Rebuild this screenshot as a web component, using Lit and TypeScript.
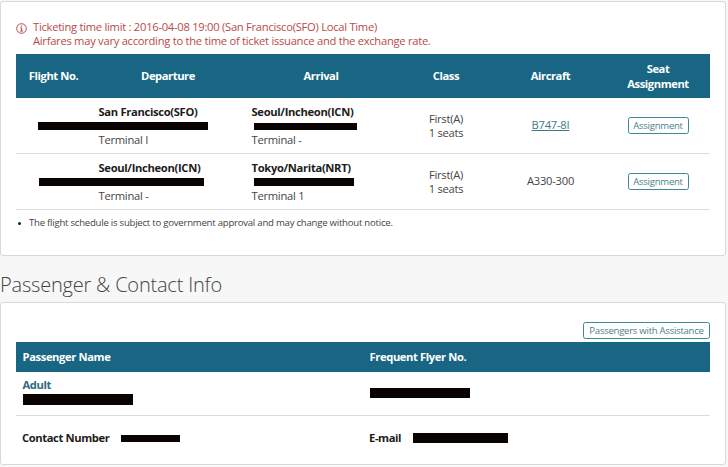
import { LitElement, html, css } from "lit";
import { customElement, property } from "lit/decorators.js";

interface Leg {
  from: string;
  fromTerminal: string;
  to: string;
  toTerminal: string;
  aircraft: string;
  linked: boolean;
}

const LEGS: Leg[] = [
  { from: "San Francisco(SFO)", fromTerminal: "Terminal I", to: "Seoul/Incheon(ICN)", toTerminal: "Terminal -", aircraft: "B747-8I", linked: true },
  { from: "Seoul/Incheon(ICN)", fromTerminal: "Terminal -", to: "Tokyo/Narita(NRT)", toTerminal: "Terminal 1", aircraft: "A330-300", linked: false },
];

@customElement("outline-button")
class OutlineButton extends LitElement {
  static styles = css`
    :host { display: inline-block; }
    button {
      display: block; box-sizing: border-box; width: 100%; height: 17px; padding: 0;
      border: 1px solid #3c8a98; border-radius: 2.5px; background: #fff; color: #4c818b;
      font: 9.6px/14px "Open Sans", sans-serif; letter-spacing: -0.28px; text-align: center; white-space: nowrap;
    }
  `;
  render() {
    return html`<button><slot></slot></button>`;
  }
}

@customElement("flight-table")
class FlightTable extends LitElement {
  @property({ attribute: false }) legs: Leg[] = [];
  static styles = css`
    :host { display: block; font-size: 11.2px; line-height: 14.2px; letter-spacing: -0.25px; color: #444; }
    .row { display: grid; grid-template-columns: 75px 154px 152px 98px 111px 104px; align-items: center; position: relative; }
    .head { box-sizing: border-box; height: 44px; padding-top: 1px; background: #186684; color: #fff; font-weight: 700; letter-spacing: -0.42px; text-align: center; }
    .leg { height: 56px; box-sizing: border-box; border-bottom: 1px solid #dcdcdc; }
    .place { padding: 1px 0 0 7.5px; white-space: nowrap; }
    .place + .place { padding-left: 6.5px; }
    .place b { color: #1c1c1c; letter-spacing: -0.32px; }
    .place span, .place b { display: block; }
    .time { height: 14.2px; display: flex; align-items: center; }
    .mask { background: #090301; display: block; }
    .arr { width: 103px; height: 7px; margin: 0 0 0 2.5px; }
    .second .arr { width: 100px; height: 8px; margin-top: -1px; }
    .flight { position: absolute; left: 22px; top: 24px; width: 170px; height: 8px; }
    .second .flight { left: 23.4px; width: 165px; }
    .center { text-align: center; }
    .class { padding-top: 1px; }
    .link { color: #3c788b; text-decoration: underline; text-underline-offset: 1px; }
    outline-button { width: 61px; }
  `;
  render() {
    return html`
      <div class="row head">
        <span>Flight No.</span><span>Departure</span><span>Arrival</span><span>Class</span><span>Aircraft</span><span>Seat<br />Assignment</span>
      </div>
      ${this.legs.map(
        (l, i) => html`<div class="row leg ${i ? "second" : "first"}">
          <div><i class="mask flight"></i></div>
          <div class="place"><b>${l.from}</b><div class="time"></div><span>${l.fromTerminal}</span></div>
          <div class="place"><b>${l.to}</b><div class="time"><i class="mask arr"></i></div><span>${l.toTerminal}</span></div>
          <div class="center class">First(A)<br />1 seats</div>
          <div class="center">${l.linked ? html`<span class="link">${l.aircraft}</span>` : l.aircraft}</div>
          <div class="center"><outline-button>Assignment</outline-button></div>
        </div>`
      )}
    `;
  }
}

@customElement("passenger-table")
class PassengerTable extends LitElement {
  static styles = css`
    :host { display: block; font-size: 11.2px; line-height: 14px; font-weight: 700; letter-spacing: -0.38px; color: #1c1c1c; }
    .row { display: grid; grid-template-columns: 347px 1fr; }
    .row > div { padding-left: 6.5px; }
    .head { height: 30px; background: #186684; color: #fff; align-items: center; }
    .guest { height: 44px; box-sizing: border-box; border-bottom: 1px solid #dcdcdc; padding-top: 6px; }
    .adult { color: #2d6983; }
    .mask { background: #090301; display: block; }
    .name { width: 110px; height: 11px; margin-top: 2px; margin-left: 0.4px; }
    .ffn { width: 100px; height: 10px; margin: 10px 0 0 0.5px; }
    .contact { height: 44px; align-items: center; }
    .contact > div { display: flex; align-items: center; padding-left: 6px; }
    .phone { width: 59px; height: 7px; margin-left: auto; }
    .mail { width: 95px; height: 10.5px; margin-left: auto; }
    .label { display: flex; width: 158px; align-items: center; }
    .label.short { width: 139px; }
  `;
  render() {
    return html`
      <div class="row head"><div>Passenger Name</div><div>Frequent Flyer No.</div></div>
      <div class="row guest">
        <div><span class="adult">Adult</span><i class="mask name"></i></div>
        <div><i class="mask ffn"></i></div>
      </div>
      <div class="row contact">
        <div><div class="label">Contact Number<i class="mask phone"></i></div></div>
        <div><div class="label short">E-mail<i class="mask mail"></i></div></div>
      </div>
    `;
  }
}

@customElement("app-root")
class AppRoot extends LitElement {
  static styles = css`
    :host { display: block; box-sizing: border-box; width: 728px; height: 467px; padding-top: 1px; background: #f7f7f7; overflow: hidden; font-family: "Open Sans", sans-serif; }
    .card { box-sizing: border-box; width: 726px; padding: 0 15px; border: 1px solid #d8d8d8; border-radius: 3px; background: #fff; }
    .flights { height: 255px; padding-top: 18px; }
    .notice { display: flex; height: 34px; color: #b84a48; font-size: 11.2px; line-height: 13.8px; letter-spacing: -0.27px; white-space: nowrap; }
    .notice svg { width: 11px; height: 11px; margin: 3px 6px 0 0; flex: none; }
    .note { display: flex; align-items: center; font-size: 9.6px; line-height: 14px; letter-spacing: -0.24px; color: #444; margin-top: 6px; }
    .dot { width: 3px; height: 3px; border-radius: 50%; background: #222; margin: 0 8px 0 2px; }
    h2 { margin: 0; height: 46px; font-size: 20px; line-height: 57px; font-weight: 300; letter-spacing: -0.2px; color: #444; white-space: nowrap; }
    .people { height: 163px; padding-top: 19px; }
    .actions { display: flex; justify-content: flex-end; height: 20px; }
    .actions outline-button { width: 127px; }
  `;
  render() {
    return html`
      <section class="card flights">
        <div class="notice">
          <svg viewBox="0 0 11 11" fill="none" stroke="#b84a48">
            <circle cx="5.5" cy="5.5" r="4.8" />
            <path d="M4.2 4.9H5.6V8M4 8H7.1" />
            <path d="M4.9 3H6.1" stroke-width="1.2" />
          </svg>
          <div>Ticketing time limit : 2016-04-08 19:00 (San Francisco(SFO) Local Time)<br />Airfares may vary according to the time of ticket issuance and the exchange rate.</div>
        </div>
        <flight-table .legs=${LEGS}></flight-table>
        <div class="note"><i class="dot"></i><span>The flight schedule is subject to government approval and may change without notice.</span></div>
      </section>
      <h2>Passenger &amp; Contact Info</h2>
      <section class="card people">
        <div class="actions"><outline-button>Passengers with Assistance</outline-button></div>
        <passenger-table></passenger-table>
      </section>
    `;
  }
}
